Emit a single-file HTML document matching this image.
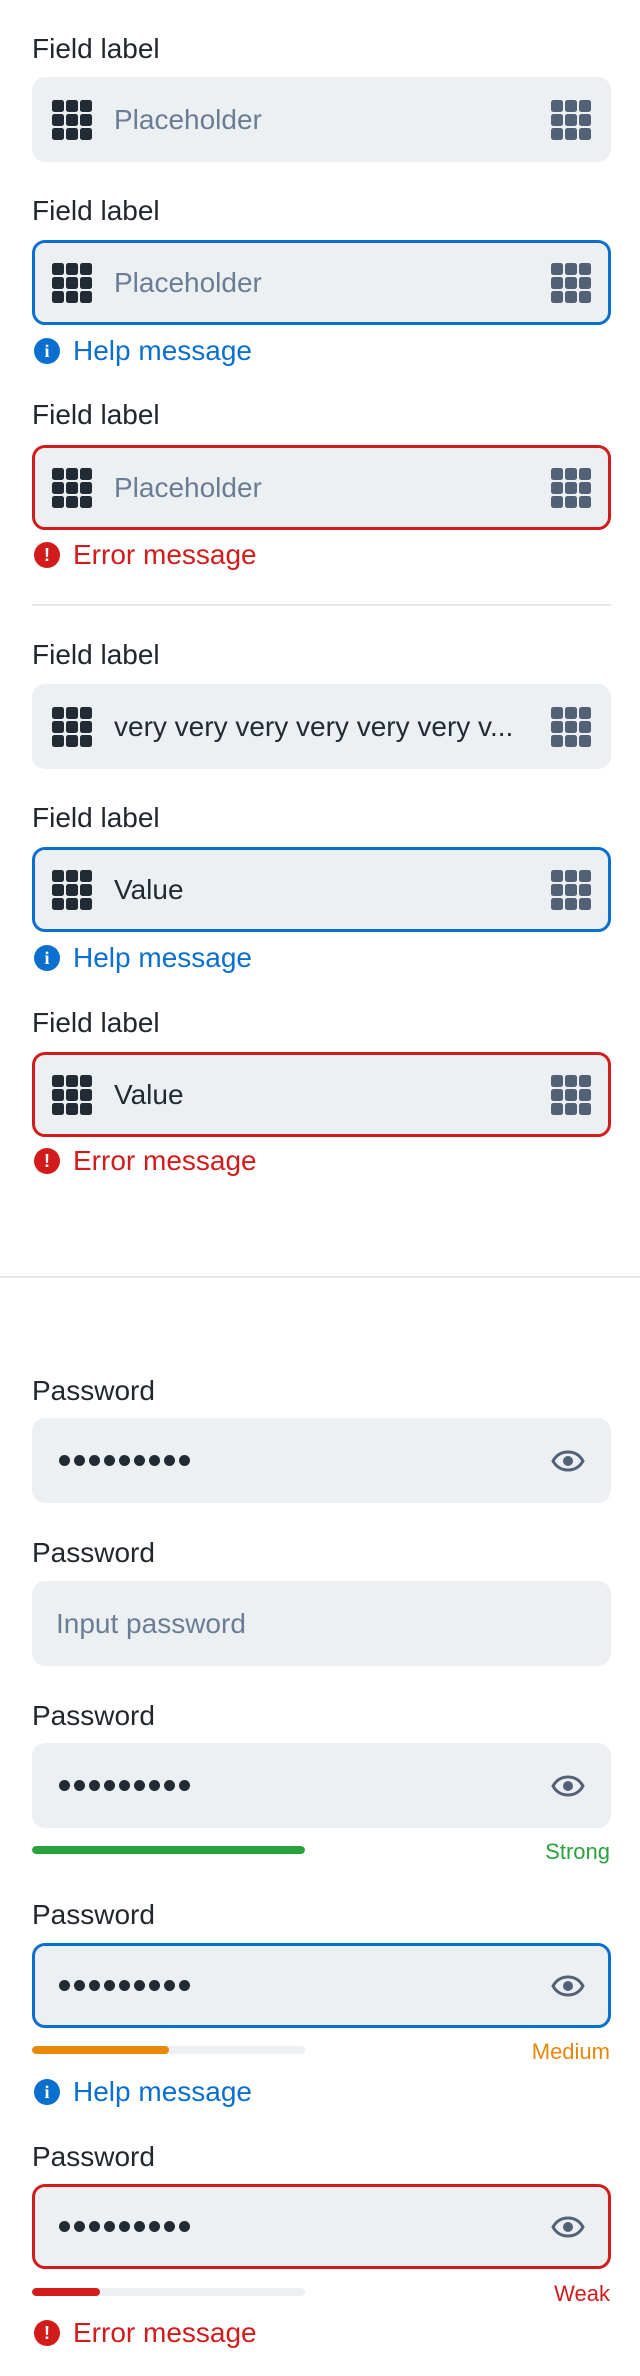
<!DOCTYPE html>
<html><head><meta charset="utf-8"><style>
*{margin:0;padding:0;box-sizing:border-box}
body{width:640px;height:2376px;background:#fff;position:relative;font-family:"Liberation Sans",sans-serif;overflow:hidden}
.a{position:absolute}
.lbl{left:32px;height:34px;line-height:34px;font-size:28px;color:#22272e;margin-top:-17px}
.box{left:32px;width:579px;height:85px;background:#edf0f3;border-radius:13px}
.box.b{border:3px solid #0a6fce}
.box.r{border:3px solid #d21c1c}
.g{position:absolute;top:50%;margin-top:-20px;width:40px;height:40px;display:grid;grid-template-columns:repeat(3,12px);grid-template-rows:repeat(3,12px);gap:2px}
.g i{border-radius:2.5px;background:#222a33}
.g.L{left:20px}.g.R{right:20px}.g.R i{background:#536176}
.b .g.L{left:17px}.b .g.R{right:17px}.r .g.L{left:17px}.r .g.R{right:17px}
.t{position:absolute;left:82px;top:0;bottom:0;right:80px;display:flex;align-items:center;font-size:28px;color:#6a7d95;white-space:nowrap;overflow:hidden}
.b .t,.r .t{left:79px}
.v{color:#222a33}
.msg{left:34px;height:34px;line-height:34px;margin-top:-17px;font-size:28px;display:flex;align-items:center}
.msg .c{width:26px;height:26px;border-radius:50%;color:#fff;font-size:18px;font-weight:bold;text-align:center;line-height:26px;margin-right:13px;font-family:"Liberation Serif",serif}
.help{color:#0a6fce}.help .c{background:#0a6fce}
.err{color:#d21c1c}.err .c{background:#d21c1c;font-family:"Liberation Sans",sans-serif}
.dots{position:absolute;left:27px;top:50%;margin-top:-6px;display:flex;gap:4px}
.dots i{width:11px;height:11px;border-radius:50%;background:#222a33}
.b .dots,.r .dots{left:24px}
.eye{position:absolute;right:26px;top:50%;margin-top:-11px}
.b .eye,.r .eye{right:23px}
.bar{left:32px;width:273px;height:8px;border-radius:4px;background:#edf0f3;margin-top:-4px;overflow:hidden}
.bar i{display:block;height:8px;border-radius:4px}
.st{right:30px;font-size:22px;height:26px;line-height:26px;margin-top:-12px}
</style></head><body>

<div class="a lbl" style="top:49px">Field label</div>
<div class="a box" style="top:77px"><div class="g L"><i></i><i></i><i></i><i></i><i></i><i></i><i></i><i></i><i></i></div><div class="t">Placeholder</div><div class="g R"><i></i><i></i><i></i><i></i><i></i><i></i><i></i><i></i><i></i></div></div>

<div class="a lbl" style="top:211px">Field label</div>
<div class="a box b" style="top:240px"><div class="g L"><i></i><i></i><i></i><i></i><i></i><i></i><i></i><i></i><i></i></div><div class="t">Placeholder</div><div class="g R"><i></i><i></i><i></i><i></i><i></i><i></i><i></i><i></i><i></i></div></div>
<div class="a msg help" style="top:351px"><span class="c">i</span>Help message</div>

<div class="a lbl" style="top:415px">Field label</div>
<div class="a box r" style="top:445px"><div class="g L"><i></i><i></i><i></i><i></i><i></i><i></i><i></i><i></i><i></i></div><div class="t">Placeholder</div><div class="g R"><i></i><i></i><i></i><i></i><i></i><i></i><i></i><i></i><i></i></div></div>
<div class="a msg err" style="top:555px"><span class="c">!</span>Error message</div>

<div class="a" style="left:32px;width:579px;top:604px;height:2px;background:#e6e9ec"></div>

<div class="a lbl" style="top:655px">Field label</div>
<div class="a box" style="top:684px"><div class="g L"><i></i><i></i><i></i><i></i><i></i><i></i><i></i><i></i><i></i></div><div class="t v">very very very very very very v...</div><div class="g R"><i></i><i></i><i></i><i></i><i></i><i></i><i></i><i></i><i></i></div></div>

<div class="a lbl" style="top:818px">Field label</div>
<div class="a box b" style="top:847px"><div class="g L"><i></i><i></i><i></i><i></i><i></i><i></i><i></i><i></i><i></i></div><div class="t v">Value</div><div class="g R"><i></i><i></i><i></i><i></i><i></i><i></i><i></i><i></i><i></i></div></div>
<div class="a msg help" style="top:958px"><span class="c">i</span>Help message</div>

<div class="a lbl" style="top:1023px">Field label</div>
<div class="a box r" style="top:1052px"><div class="g L"><i></i><i></i><i></i><i></i><i></i><i></i><i></i><i></i><i></i></div><div class="t v">Value</div><div class="g R"><i></i><i></i><i></i><i></i><i></i><i></i><i></i><i></i><i></i></div></div>
<div class="a msg err" style="top:1161px"><span class="c">!</span>Error message</div>

<div class="a" style="left:0;width:640px;top:1276px;height:2px;background:#e6e9ec"></div>

<div class="a lbl" style="top:1391px">Password</div>
<div class="a box" style="top:1418px"><div class="dots"><i></i><i></i><i></i><i></i><i></i><i></i><i></i><i></i><i></i></div>
<svg class="eye" width="34" height="22" viewBox="0 0 34 22"><path d="M2 11C6 4 11 2 17 2s11 2 15 9c-4 7-9 9-15 9S6 18 2 11z" fill="none" stroke="#536176" stroke-width="3"/><circle cx="17" cy="11" r="5" fill="#536176"/></svg></div>

<div class="a lbl" style="top:1553px">Password</div>
<div class="a box" style="top:1581px"><div class="t" style="left:24px">Input password</div></div>

<div class="a lbl" style="top:1716px">Password</div>
<div class="a box" style="top:1743px"><div class="dots"><i></i><i></i><i></i><i></i><i></i><i></i><i></i><i></i><i></i></div>
<svg class="eye" width="34" height="22" viewBox="0 0 34 22"><path d="M2 11C6 4 11 2 17 2s11 2 15 9c-4 7-9 9-15 9S6 18 2 11z" fill="none" stroke="#536176" stroke-width="3"/><circle cx="17" cy="11" r="5" fill="#536176"/></svg></div>
<div class="a bar" style="top:1850px"><i style="width:273px;background:#2aa23c"></i></div>
<div class="a st" style="top:1851px;color:#2aa23c">Strong</div>

<div class="a lbl" style="top:1915px">Password</div>
<div class="a box b" style="top:1943px"><div class="dots"><i></i><i></i><i></i><i></i><i></i><i></i><i></i><i></i><i></i></div>
<svg class="eye" width="34" height="22" viewBox="0 0 34 22"><path d="M2 11C6 4 11 2 17 2s11 2 15 9c-4 7-9 9-15 9S6 18 2 11z" fill="none" stroke="#536176" stroke-width="3"/><circle cx="17" cy="11" r="5" fill="#536176"/></svg></div>
<div class="a bar" style="top:2050px"><i style="width:137px;background:#e8870a"></i></div>
<div class="a st" style="top:2051px;color:#e8870a">Medium</div>
<div class="a msg help" style="top:2092px"><span class="c">i</span>Help message</div>

<div class="a lbl" style="top:2157px">Password</div>
<div class="a box r" style="top:2184px"><div class="dots"><i></i><i></i><i></i><i></i><i></i><i></i><i></i><i></i><i></i></div>
<svg class="eye" width="34" height="22" viewBox="0 0 34 22"><path d="M2 11C6 4 11 2 17 2s11 2 15 9c-4 7-9 9-15 9S6 18 2 11z" fill="none" stroke="#536176" stroke-width="3"/><circle cx="17" cy="11" r="5" fill="#536176"/></svg></div>
<div class="a bar" style="top:2292px"><i style="width:68px;background:#d21c1c"></i></div>
<div class="a st" style="top:2293px;color:#d21c1c">Weak</div>
<div class="a msg err" style="top:2333px"><span class="c">!</span>Error message</div>

</body></html>
